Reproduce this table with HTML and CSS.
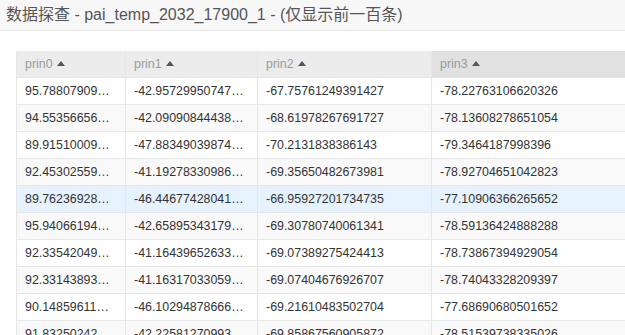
FILE: index.html
```html
<!DOCTYPE html>
<html>
<head>
<meta charset="utf-8">
<link rel="stylesheet" href="styles.css">
</head>
<body>
<div class="title">数据探查 - pai_temp_2032_17900_1 - (仅显示前一百条)</div>
<div class="wrap">
<div class="clip">
<table class="grid">
<colgroup><col class="c1"><col class="c2"><col class="c3"><col class="c4"></colgroup>
<thead>
<tr><th>prin0<span class="tri"></span></th><th>prin1<span class="tri"></span></th><th>prin2<span class="tri"></span></th><th class="sorted">prin3<span class="tri"></span></th></tr>
</thead>
<tbody>
<tr><td>95.78807909…</td><td>-42.95729950747…</td><td>-67.75761249391427</td><td>-78.22763106620326</td></tr>
<tr><td>94.55356656…</td><td>-42.09090844438…</td><td>-68.61978267691727</td><td>-78.13608278651054</td></tr>
<tr><td>89.91510009…</td><td>-47.88349039874…</td><td>-70.2131838386143</td><td>-79.3464187998396</td></tr>
<tr><td>92.45302559…</td><td>-41.19278330986…</td><td>-69.35650482673981</td><td>-78.92704651042823</td></tr>
<tr class="hover"><td>89.76236928…</td><td>-46.44677428041…</td><td>-66.95927201734735</td><td>-77.10906366265652</td></tr>
<tr><td>95.94066194…</td><td>-42.65895343179…</td><td>-69.30780740061341</td><td>-78.59136424888288</td></tr>
<tr><td>92.33542049…</td><td>-41.16439652633…</td><td>-69.07389275424413</td><td>-78.73867394929054</td></tr>
<tr><td>92.33143893…</td><td>-41.16317033059…</td><td>-69.07404676926707</td><td>-78.74043328209397</td></tr>
<tr><td>90.14859611…</td><td>-46.10294878666…</td><td>-69.21610483502704</td><td>-77.68690680501652</td></tr>
<tr><td>91.83250242…</td><td>-42.22581270993…</td><td>-69.85867560905872</td><td>-78.51539738335026</td></tr>
</tbody>
</table>
</div>
</div>
</body>
</html>
```
FILE: styles.css
```css
html, body {
  margin: 0;
  padding: 0;
  background: #fff;
  overflow: hidden;
  font-family: "Liberation Sans", "Noto Sans CJK SC", Arial, sans-serif;
}
.title {
  height: 30px;
  line-height: 29px;
  padding-left: 6px;
  font-size: 16px;
  color: #555;
  background: #f7f7f7;
  border-bottom: 1px solid #e5e5e5;
  white-space: nowrap;
}
.wrap {
  padding: 20px 0 0 16px;
}
.clip {
  width: 609px;
  overflow: hidden;
}
.grid {
  border-collapse: collapse;
  table-layout: fixed;
  width: 760px;
  font-size: 12.4px;
}
.c1 { width: 109px; }
.c2 { width: 132px; }
.c3 { width: 174px; }
.c4 { width: 345px; }
.grid th, .grid td {
  border: 1px solid #e6e6e6;
  height: 26px;
  padding: 0 8px;
  text-align: left;
  white-space: nowrap;
  overflow: hidden;
  box-sizing: border-box;
}
.grid th {
  background: #ececec;
  color: #9a9a9a;
  font-weight: normal;
  border-top: none;
  height: 26px;
}
.grid th.sorted {
  background: #e1e1e1;
}
.grid td {
  color: #333;
  height: 27px;
}
.grid tbody tr:nth-child(even) td {
  background: #f9f9f9;
}
.grid tbody tr.hover td {
  background: #e6f2fd;
}
.tri {
  display: inline-block;
  width: 0;
  height: 0;
  margin-left: 4px;
  vertical-align: 2px;
  border-left: 4px solid transparent;
  border-right: 4px solid transparent;
  border-bottom: 5px solid #555;
}
```
